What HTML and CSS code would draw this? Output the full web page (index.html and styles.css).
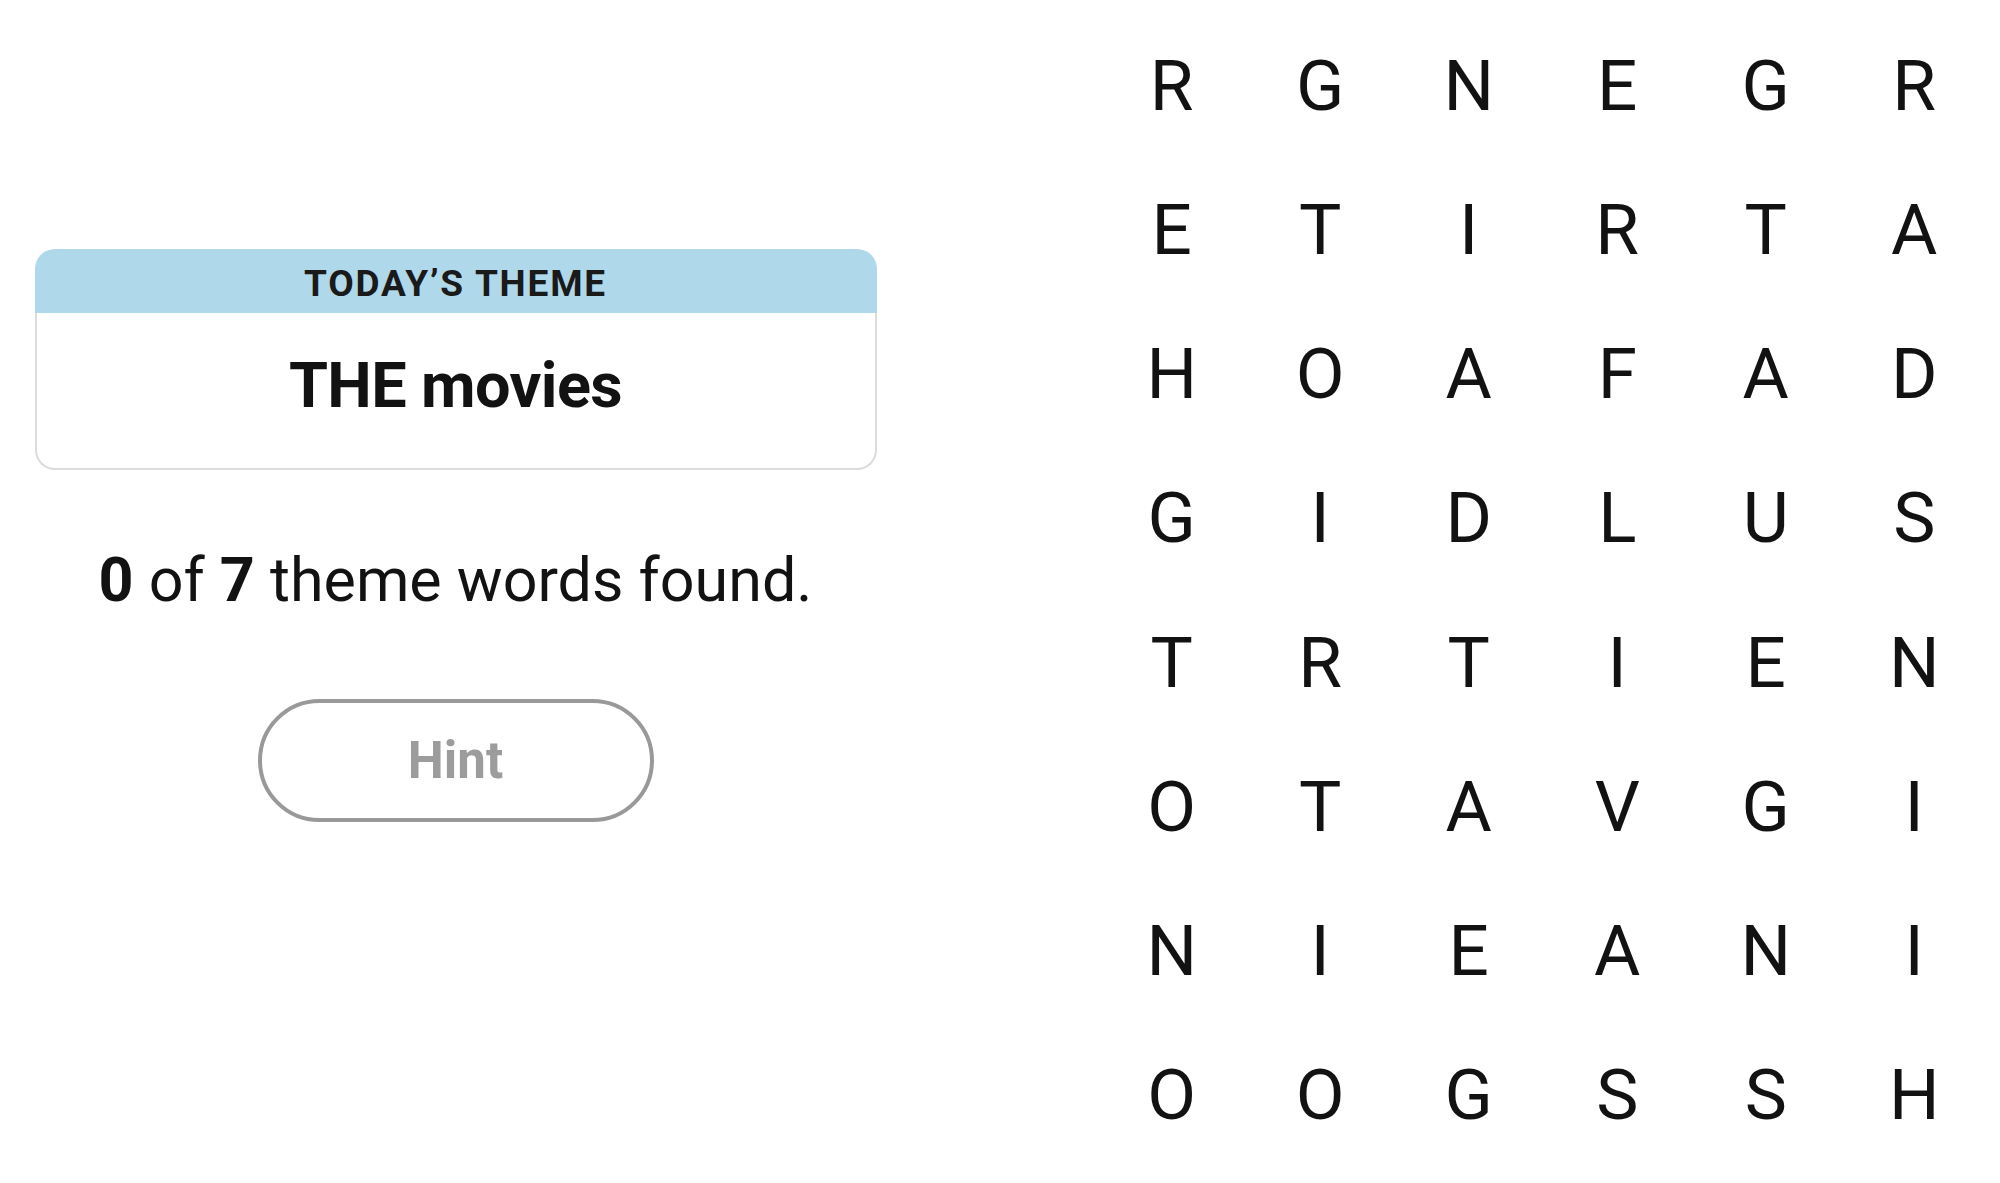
FILE: index.html
```html
<!DOCTYPE html>
<html lang="en">
<head>
<meta charset="utf-8">
<title>Strands</title>
<link rel="stylesheet" href="styles.css">
</head>
<body>
<main class="page">
  <section class="left">
    <div class="card">
      <div class="card-head">TODAY’S THEME</div>
      <div class="card-body">THE movies</div>
    </div>
    <p class="counter"><b>0</b> of <b>7</b> theme words found.</p>
    <button class="hint" type="button">Hint</button>
  </section>
  <section class="grid">
    <span>R</span><span>G</span><span>N</span><span>E</span><span>G</span><span>R</span>
    <span>E</span><span>T</span><span>I</span><span>R</span><span>T</span><span>A</span>
    <span>H</span><span>O</span><span>A</span><span>F</span><span>A</span><span>D</span>
    <span>G</span><span>I</span><span>D</span><span>L</span><span>U</span><span>S</span>
    <span>T</span><span>R</span><span>T</span><span>I</span><span>E</span><span>N</span>
    <span>O</span><span>T</span><span>A</span><span>V</span><span>G</span><span>I</span>
    <span>N</span><span>I</span><span>E</span><span>A</span><span>N</span><span>I</span>
    <span>O</span><span>O</span><span>G</span><span>S</span><span>S</span><span>H</span>
  </section>
</main>
</body>
</html>
```

FILE: styles.css
```css
* { box-sizing: border-box; }
html, body { margin: 0; padding: 0; background: #fff; }
body {
  font-family: Roboto, "Liberation Sans", Arial, sans-serif;
  color: #121212;
}
.page {
  display: flex;
  width: 2000px;
  height: 1183px;
  overflow: hidden;
}
.left {
  width: 911px;
  flex: none;
  display: flex;
  flex-direction: column;
  align-items: center;
  padding-top: 249px;
}
.card {
  width: 842px;
}
.card-head {
  height: 64px;
  padding-top: 6px;
  line-height: 58px;
  background: #afd8eb;
  border-radius: 20px 20px 0 0;
  text-align: center;
  font-size: 37px;
  font-weight: 700;
  letter-spacing: 1.8px;
  color: #1a1a1a;
}
.card-body {
  border: 2px solid #dcdcdc;
  border-top: none;
  border-radius: 0 0 20px 20px;
  padding: 36px 0 45px;
  line-height: 74px;
  text-align: center;
  font-size: 63px;
  font-weight: 700;
  letter-spacing: -0.6px;
}
.counter {
  margin: 74px 0 0;
  font-size: 61px;
  line-height: 72px;
  font-weight: 400;
}
.counter b { font-weight: 700; }
.hint {
  margin-top: 83px;
  width: 396px;
  height: 123px;
  border: 4px solid #999;
  border-radius: 62px;
  background: #fff;
  font-family: Roboto, "Liberation Sans", Arial, sans-serif;
  font-size: 51px;
  font-weight: 700;
  line-height: 115px;
  color: #9c9c9c;
  padding: 0;
}
.grid {
  margin-left: 186.5px;
  padding-top: 13.85px;
  display: grid;
  grid-template-columns: repeat(6, 148.5px);
  grid-auto-rows: 144.2px;
  font-size: 71px;
  line-height: 144.2px;
  text-align: center;
  color: #121212;
}
```
